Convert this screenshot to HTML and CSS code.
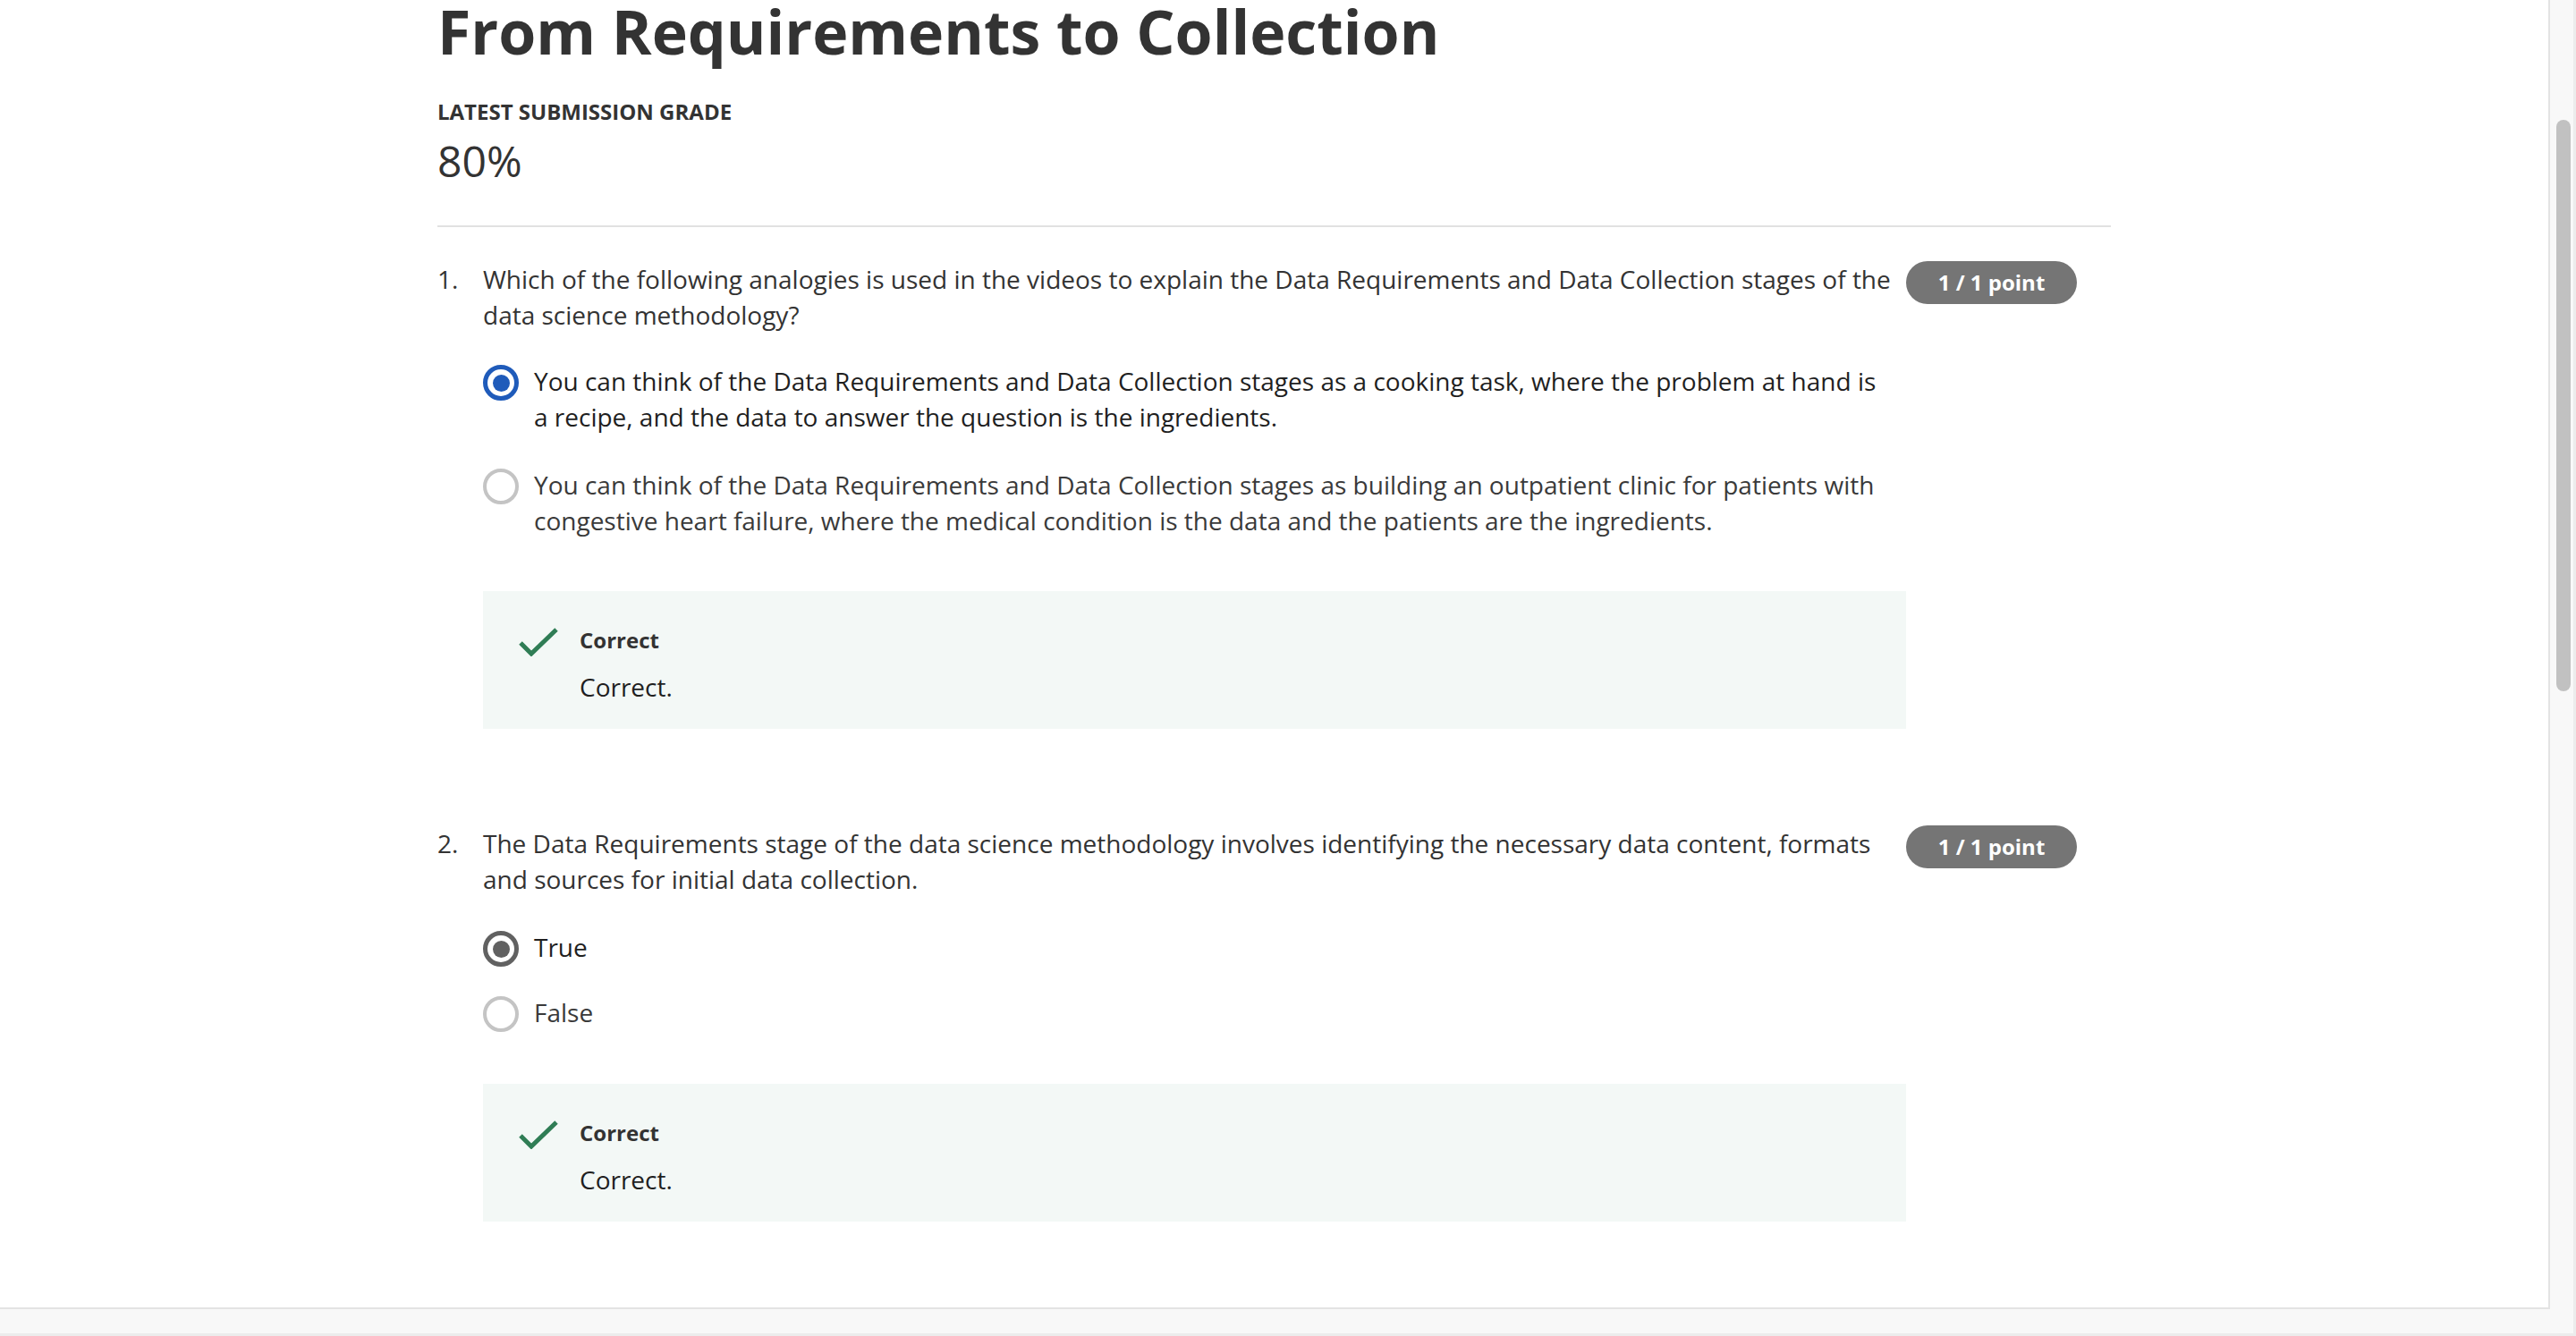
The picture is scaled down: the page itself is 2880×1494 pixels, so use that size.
FILE: index.html
```html
<!DOCTYPE html>
<html lang="en">
<head>
<meta charset="utf-8">
<title>From Requirements to Collection</title>
<link rel="stylesheet" href="styles.css">
</head>
<body>
<div class="frame">
  <div class="viewport">
    <main class="page">
      <h1 class="title">From Requirements to Collection</h1>
      <div class="grade-label">LATEST SUBMISSION GRADE</div>
      <div class="grade-value">80%</div>
      <hr class="divider">

      <section class="question q-first">
        <div class="q-num">1.</div>
        <div class="q-body">
          <p class="q-text">Which of the following analogies is used in the videos to explain the Data Requirements and Data Collection stages of the data science methodology?</p>
          <div class="options">
            <div class="option selected">
              <span class="radio radio-on"><span class="dot"></span></span>
              <span class="opt-text">You can think of the Data Requirements and Data Collection stages as a cooking task, where the problem at hand is a recipe, and the data to answer the question is the ingredients.</span>
            </div>
            <div class="option">
              <span class="radio"></span>
              <span class="opt-text">You can think of the Data Requirements and Data Collection stages as building an outpatient clinic for patients with congestive heart failure, where the medical condition is the data and the patients are the ingredients.</span>
            </div>
          </div>
          <div class="feedback">
            <svg class="check" width="44" height="32" viewBox="0 0 44 32"><polyline points="2,17 14,29 42,2" fill="none" stroke="#2f7d55" stroke-width="5"/></svg>
            <div class="fb-text">
              <div class="fb-title">Correct</div>
              <div class="fb-body">Correct.</div>
            </div>
          </div>
        </div>
        <div class="badge">1 / 1 point</div>
      </section>

      <section class="question q-second">
        <div class="q-num">2.</div>
        <div class="q-body">
          <p class="q-text">The Data Requirements stage of the data science methodology involves identifying the necessary data content, formats and sources for initial data collection.</p>
          <div class="options">
            <div class="option selected">
              <span class="radio radio-gray"><span class="dot"></span></span>
              <span class="opt-text">True</span>
            </div>
            <div class="option">
              <span class="radio"></span>
              <span class="opt-text">False</span>
            </div>
          </div>
          <div class="feedback">
            <svg class="check" width="44" height="32" viewBox="0 0 44 32"><polyline points="2,17 14,29 42,2" fill="none" stroke="#2f7d55" stroke-width="5"/></svg>
            <div class="fb-text">
              <div class="fb-title">Correct</div>
              <div class="fb-body">Correct.</div>
            </div>
          </div>
        </div>
        <div class="badge">1 / 1 point</div>
      </section>
    </main>
  </div>
  <div class="vtrack"><div class="thumb"></div></div>
  <div class="hbar"></div>
</div>
</body>
</html>
```
FILE: styles.css
```css
html, body {
  margin: 0;
  padding: 0;
}
body {
  width: 2880px;
  height: 1494px;
  overflow: hidden;
  font-family: "Open Sans", "Noto Sans", sans-serif;
  color: #333;
  background: #f8f8f8;
}
.frame {
  width: 2880px;
  height: 1494px;
  box-sizing: border-box;
  border-right: 3px solid #ececec;
  border-bottom: 3px solid #ececec;
  display: grid;
  grid-template-columns: 2851px 1fr;
  grid-template-rows: 1464px 1fr;
  background: #f8f8f8;
}
.viewport {
  grid-column: 1;
  grid-row: 1;
  background: #fff;
  box-sizing: border-box;
  border-right: 2px solid #e3e3e3;
  border-bottom: 2px solid #e3e3e3;
  overflow: hidden;
}
.vtrack {
  grid-column: 2;
  grid-row: 1 / 3;
  padding-top: 134px;
  padding-left: 7px;
}
.thumb {
  width: 16px;
  height: 639px;
  border-radius: 8px;
  background: #c1c1c1;
}
.hbar {
  grid-column: 1;
  grid-row: 2;
}
.page {
  width: 1871px;
  margin: 0 auto;
}
.title {
  margin: -11px 0 0 0;
  font-size: 68px;
  line-height: 92px;
  font-weight: 700;
  color: #333;
}
.grade-label {
  margin-top: 28px;
  font-size: 24px;
  line-height: 32px;
  font-weight: 700;
  color: #333;
}
.grade-value {
  margin-top: 7px;
  font-size: 48px;
  line-height: 64px;
  font-weight: 400;
  color: #333;
}
.divider {
  margin: 40px 0 0 0;
  border: 0;
  height: 2px;
  background: #e1e1e1;
}
.question {
  display: flex;
  align-items: flex-start;
  font-size: 28px;
  line-height: 40px;
}
.q-first { margin-top: 38px; }
.q-second { margin-top: 108px; }
.q-num {
  width: 51px;
  flex: none;
}
.q-body {
  flex: 1;
  min-width: 0;
}
.q-text {
  margin: 0;
  color: #333;
}
.options {
  margin-top: 34px;
  display: flex;
  flex-direction: column;
  gap: 36px;
  padding-right: 24px;
}
.q-second .options { gap: 33px; margin-top: 36px; }
.option {
  display: flex;
  align-items: flex-start;
  gap: 17px;
  color: #3a3a3a;
}
.option.selected { color: #1f1f1f; }
.radio {
  flex: none;
  width: 40px;
  height: 40px;
  margin: 2px 0 -2px 0;
  box-sizing: border-box;
  border-radius: 50%;
  border: 4px solid #c4c4c4;
  display: flex;
  align-items: center;
  justify-content: center;
}
.radio-on { border: 5px solid #1f5bba; }
.radio-on .dot { background: #1f5bba; }
.radio-gray { border: 5px solid #616161; }
.radio-gray .dot { background: #616161; }
.dot {
  width: 19px;
  height: 19px;
  border-radius: 50%;
}
.feedback {
  margin-top: 59px;
  background: #f3f8f6;
  padding: 39px 40px 27px 40px;
  display: flex;
  align-items: flex-start;
  gap: 24px;
}
.q-second .feedback { margin-top: 60px; }
.check {
  flex: none;
  margin-top: 2px;
}
.fb-title {
  font-size: 24px;
  line-height: 32px;
  font-weight: 700;
  color: #333;
}
.fb-body {
  margin-top: 16px;
  font-size: 28px;
  line-height: 40px;
  color: #1f1f1f;
}
.badge {
  flex: none;
  width: 191px;
  height: 48px;
  margin-right: 38px;
  border-radius: 24px;
  background: #757575;
  color: #fff;
  font-size: 24px;
  line-height: 48px;
  font-weight: 700;
  text-align: center;
}
```
